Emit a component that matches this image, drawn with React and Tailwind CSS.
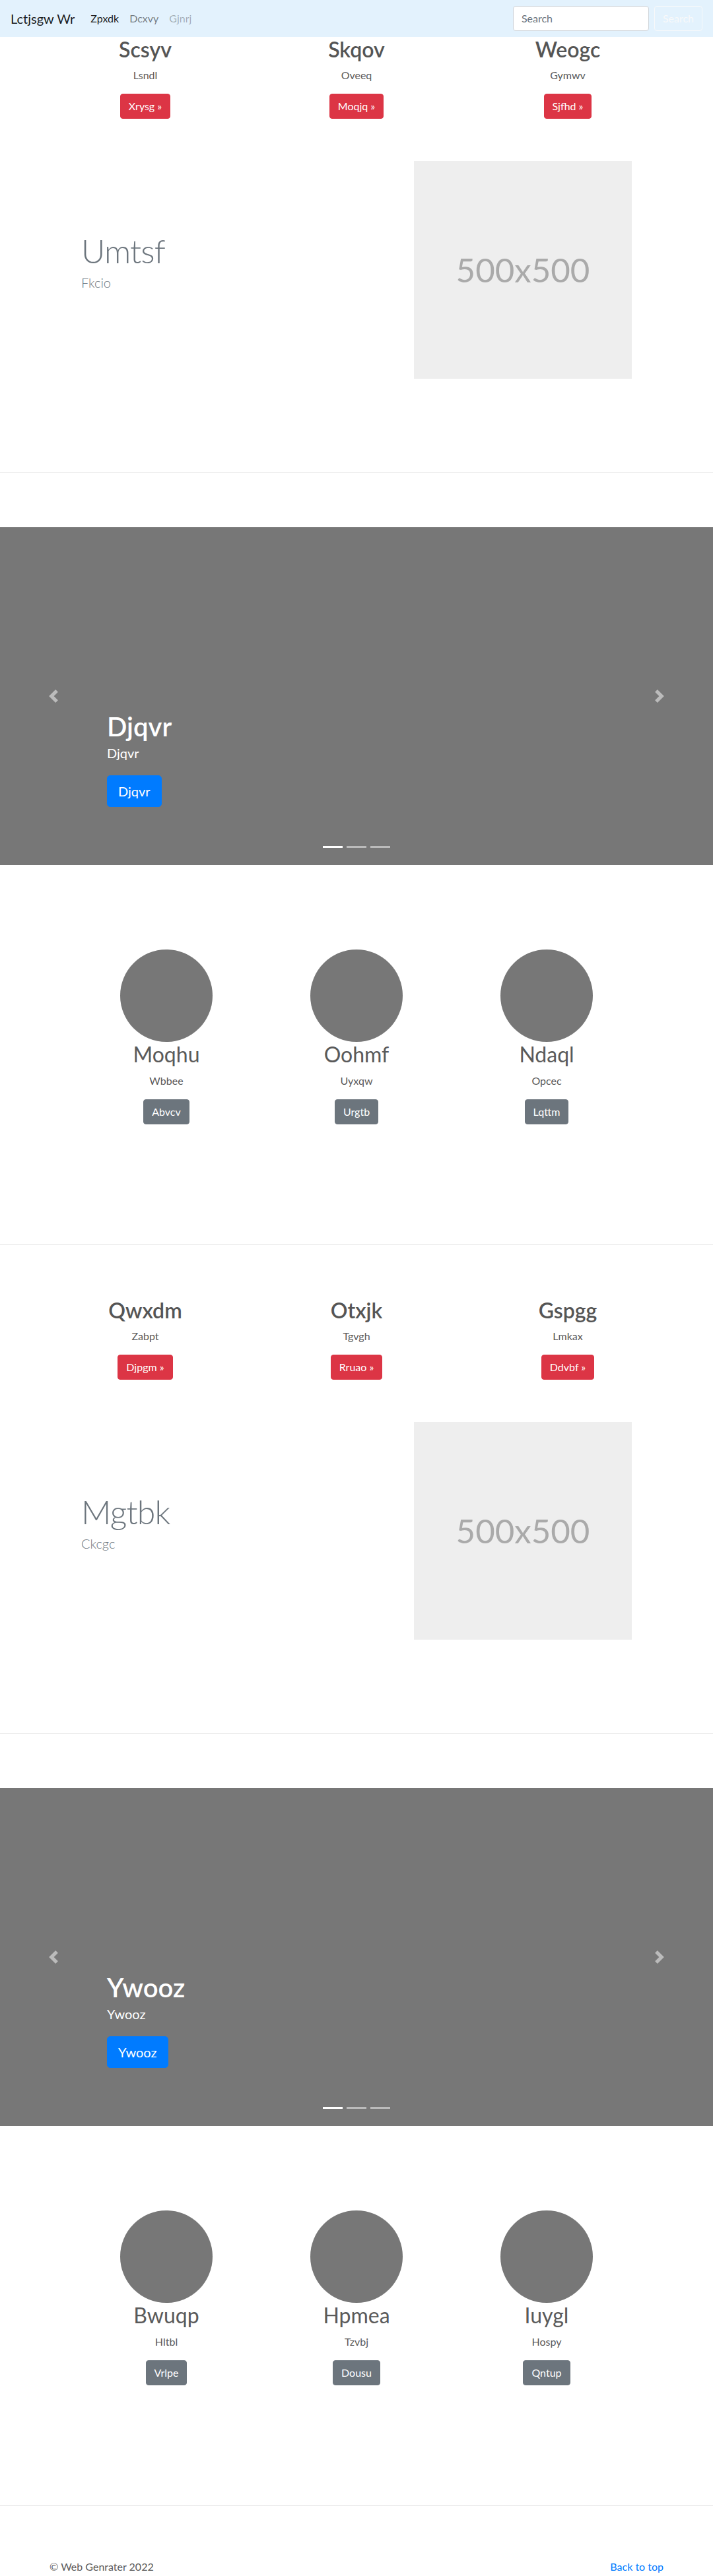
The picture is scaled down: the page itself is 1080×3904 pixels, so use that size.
import React from "react";

const sections = [
  {
    cols: [
      { h: "Scsyv", p: "Lsndl", b: "Xrysg" },
      { h: "Skqov", p: "Oveeq", b: "Moqjq" },
      { h: "Weogc", p: "Gymwv", b: "Sjfhd" },
    ],
    feat: { h: "Umtsf", p: "Fkcio" },
    slide: "Djqvr",
    circles: [
      { h: "Moqhu", p: "Wbbee", b: "Abvcv" },
      { h: "Oohmf", p: "Uyxqw", b: "Urgtb" },
      { h: "Ndaql", p: "Opcec", b: "Lqttm" },
    ],
  },
  {
    cols: [
      { h: "Qwxdm", p: "Zabpt", b: "Djpgm" },
      { h: "Otxjk", p: "Tgvgh", b: "Rruao" },
      { h: "Gspgg", p: "Lmkax", b: "Ddvbf" },
    ],
    feat: { h: "Mgtbk", p: "Ckcgc" },
    slide: "Ywooz",
    circles: [
      { h: "Bwuqp", p: "Hltbl", b: "Vrlpe" },
      { h: "Hpmea", p: "Tzvbj", b: "Dousu" },
      { h: "Iuygl", p: "Hospy", b: "Qntup" },
    ],
  },
];

function Navbar() {
  return (
    <nav className="h-[56px] bg-[#e3f2fd] flex items-center px-4">
      <span className="text-[20px] leading-[30px] text-black/90 mr-4">Lctjsgw Wr</span>
      <div className="flex items-center text-[16px] leading-6">
        <span className="px-2 text-black/90">Zpxdk</span>
        <span className="px-2 text-black/50">Dcxvy</span>
        <span className="px-2 text-black/30">Gjnrj</span>
      </div>
      <div className="ml-auto flex items-center">
        <div className="w-[206px] h-[38px] bg-white border border-[#ced4da] rounded-[4px] px-3 flex items-center text-[16px] text-[#6c757d] mr-2">
          Search
        </div>
        <div className="h-[38px] px-3 border border-[#f8f9fa] rounded-[4px] flex items-center text-[16px] text-[#f8f9fa]">
          Search
        </div>
      </div>
    </nav>
  );
}

function Chevron({ dir }) {
  return (
    <svg width="20" height="20" viewBox="0 0 8 8" fill="#fff">
      {dir === "left" ? (
        <path d="M5.25 0l-4 4 4 4 1.5-1.5L4.25 4l2.5-2.5L5.25 0z" />
      ) : (
        <path d="M2.75 0l-1.5 1.5L3.75 4l-2.5 2.5L2.75 8l4-4-4-4z" />
      )}
    </svg>
  );
}

function Section({ data }) {
  return (
    <div>
      {/* red columns */}
      <div className="w-[960px] mx-auto grid grid-cols-3">
        {data.cols.map((c) => (
          <div key={c.h} className="px-[15px] text-center">
            <h2 className="text-[32px] leading-[38.4px] font-semibold text-[#555] mb-2">{c.h}</h2>
            <p className="text-[16px] leading-6 mb-4">{c.p}</p>
            <span className="inline-block h-[38px] px-3 leading-[36px] border border-[#dc3545] bg-[#dc3545] text-white rounded-[4px] text-[16px]">
              {c.b} »
            </span>
          </div>
        ))}
      </div>

      {/* featurette */}
      <div className="w-[864px] mx-auto flex items-center mt-16">
        <div className="w-[504px] px-[15px]">
          <h2 className="text-[50px] leading-[50px] font-light tracking-[-0.8px] text-[#6c757d] mb-2">{data.feat.h}</h2>
          <p className="text-[20px] leading-[30px] font-light text-[#6c757d] mb-5">{data.feat.p}</p>
        </div>
        <div className="w-[360px] px-[15px]">
          <div className="w-[330px] h-[330px] bg-[#eee] flex items-center justify-center text-[51px] text-[#aaa]">
            500x500
          </div>
        </div>
      </div>

      <hr className="mt-[142px] mb-[82px] border-0 border-t border-black/10" />

      {/* carousel */}
      <div className="relative h-[512px] bg-[#777]">
        <div className="absolute left-0 top-0 bottom-0 w-[15%] flex items-center justify-center opacity-50">
          <Chevron dir="left" />
        </div>
        <div className="absolute right-0 top-0 bottom-0 w-[15%] flex items-center justify-center opacity-50">
          <Chevron dir="right" />
        </div>
        <div className="absolute left-[15%] right-[15%] bottom-[88px] text-white">
          <h1 className="text-[40px] leading-[48px] font-semibold">{data.slide}</h1>
          <p className="text-[20px] leading-[30px] mt-px mb-[19px]">{data.slide}</p>
          <span className="inline-block h-[48px] px-4 leading-[46px] text-[20px] bg-[#007bff] border border-[#007bff] rounded-[5px]">
            {data.slide}
          </span>
        </div>
        <div className="absolute left-0 right-0 bottom-[26px] flex justify-center">
          <span className="w-[30px] h-[3px] mx-[3px] bg-white" />
          <span className="w-[30px] h-[3px] mx-[3px] bg-white/50" />
          <span className="w-[30px] h-[3px] mx-[3px] bg-white/50" />
        </div>
      </div>

      {/* circles */}
      <div className="w-[864px] mx-auto grid grid-cols-3 mt-[128px]">
        {data.circles.map((c) => (
          <div key={c.h} className="px-[15px] text-center">
            <div className="w-[140px] h-[140px] rounded-full bg-[#777] mx-auto" />
            <h2 className="text-[32px] leading-[38.4px] font-normal mb-2">{c.h}</h2>
            <p className="text-[16px] leading-6 mb-4">{c.p}</p>
            <span className="inline-block h-[38px] px-3 leading-[36px] border border-[#6c757d] bg-[#6c757d] text-white rounded-[4px] text-[16px]">
              {c.b}
            </span>
          </div>
        ))}
      </div>

      <hr className="mt-[182px] mb-[80px] border-0 border-t border-black/10" />
    </div>
  );
}

export default function App() {
  return (
    <div className="font-['Lato',sans-serif] text-[#5a5a5a] bg-white min-h-[3904px]">
      <Navbar />
      {sections.map((s, i) => (
        <Section key={i} data={s} />
      ))}
      <footer className="w-[960px] mx-auto px-[15px] flex justify-between text-[16px] leading-6">
        <span>© Web Genrater 2022</span>
        <span className="text-[#007bff]">Back to top</span>
      </footer>
    </div>
  );
}
